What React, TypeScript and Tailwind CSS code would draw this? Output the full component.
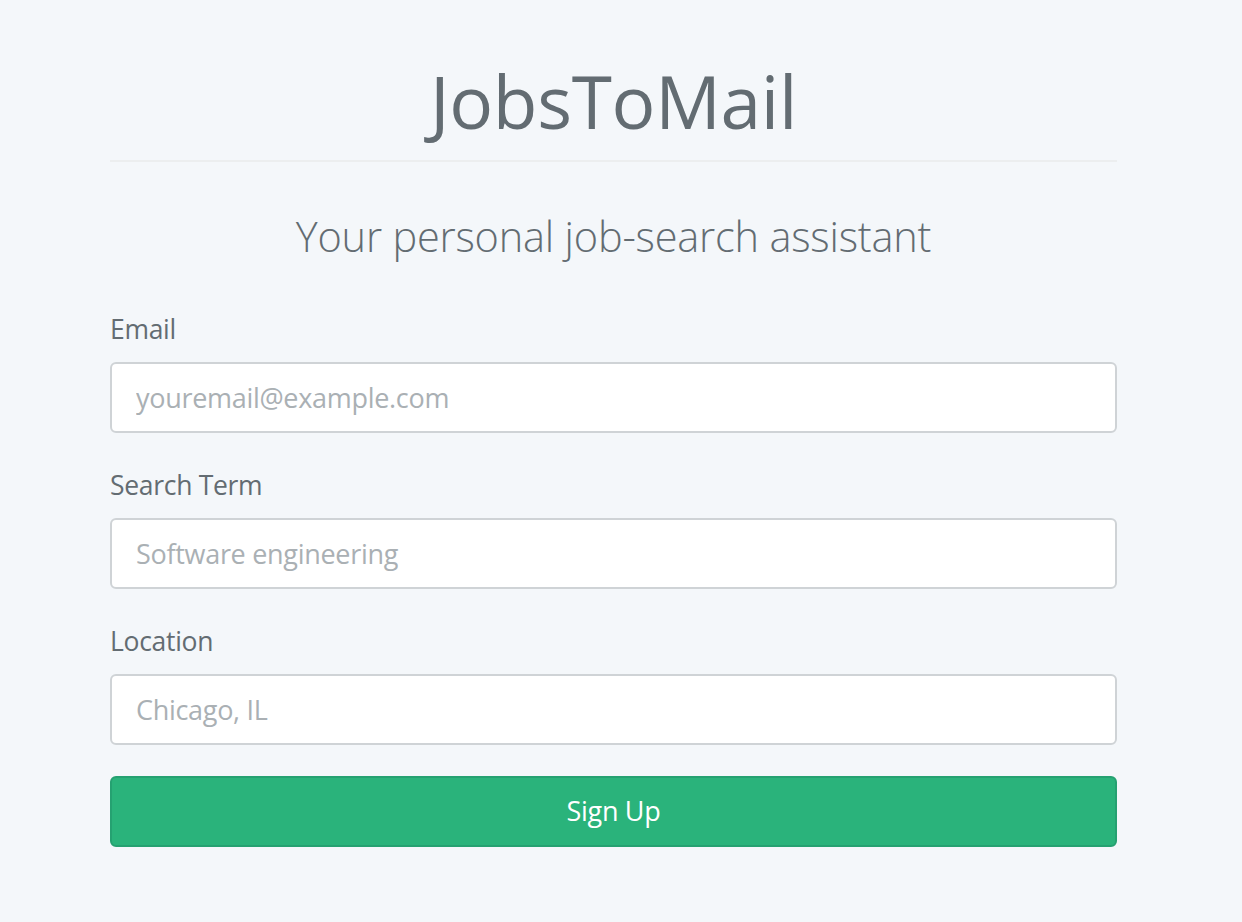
import React from "react";

export default function App() {
  const font = { fontFamily: '"Open Sans", "Noto Sans", sans-serif' };
  const inputCls =
    "mt-[16px] h-[71px] rounded-[6px] border-2 border-[#cfd3d6] bg-white px-[24px] text-[27px] tracking-[-0.3px] placeholder:text-[#aab0b4] outline-none";
  return (
    <div className="min-h-[922px] w-full bg-[#f4f7fa] text-[#636c72]" style={font}>
      <div className="ml-[110px] w-[1007px] pt-[57px]">
        <h1 className="text-center text-[73px] leading-[88px] font-normal tracking-[-0.3px]">JobsToMail</h1>
        <div className="mt-[15px] h-[2px] bg-[#eceeef]" />
        <h2 className="mt-[50px] text-center text-[41.5px] leading-[48px] font-light tracking-[-0.2px]">
          Your personal job-search assistant
        </h2>
        <form className="mt-[52px] flex flex-col">
          <label className="text-[26.5px] leading-[34px] tracking-[-0.3px]">Email</label>
          <input className={inputCls} placeholder="youremail@example.com" />
          <label className="mt-[35px] text-[26.5px] leading-[34px] tracking-[-0.3px]">Search Term</label>
          <input className={inputCls} placeholder="Software engineering" />
          <label className="mt-[35px] text-[26.5px] leading-[34px] tracking-[-0.3px]">Location</label>
          <input className={inputCls} placeholder="Chicago, IL" />
          <button
            type="button"
            className="mt-[31px] h-[71px] rounded-[6px] border-2 border-[#25a171] bg-[#2ab37b] text-[27px] tracking-[-0.3px] text-white"
          >
            Sign Up
          </button>
        </form>
      </div>
    </div>
  );
}
